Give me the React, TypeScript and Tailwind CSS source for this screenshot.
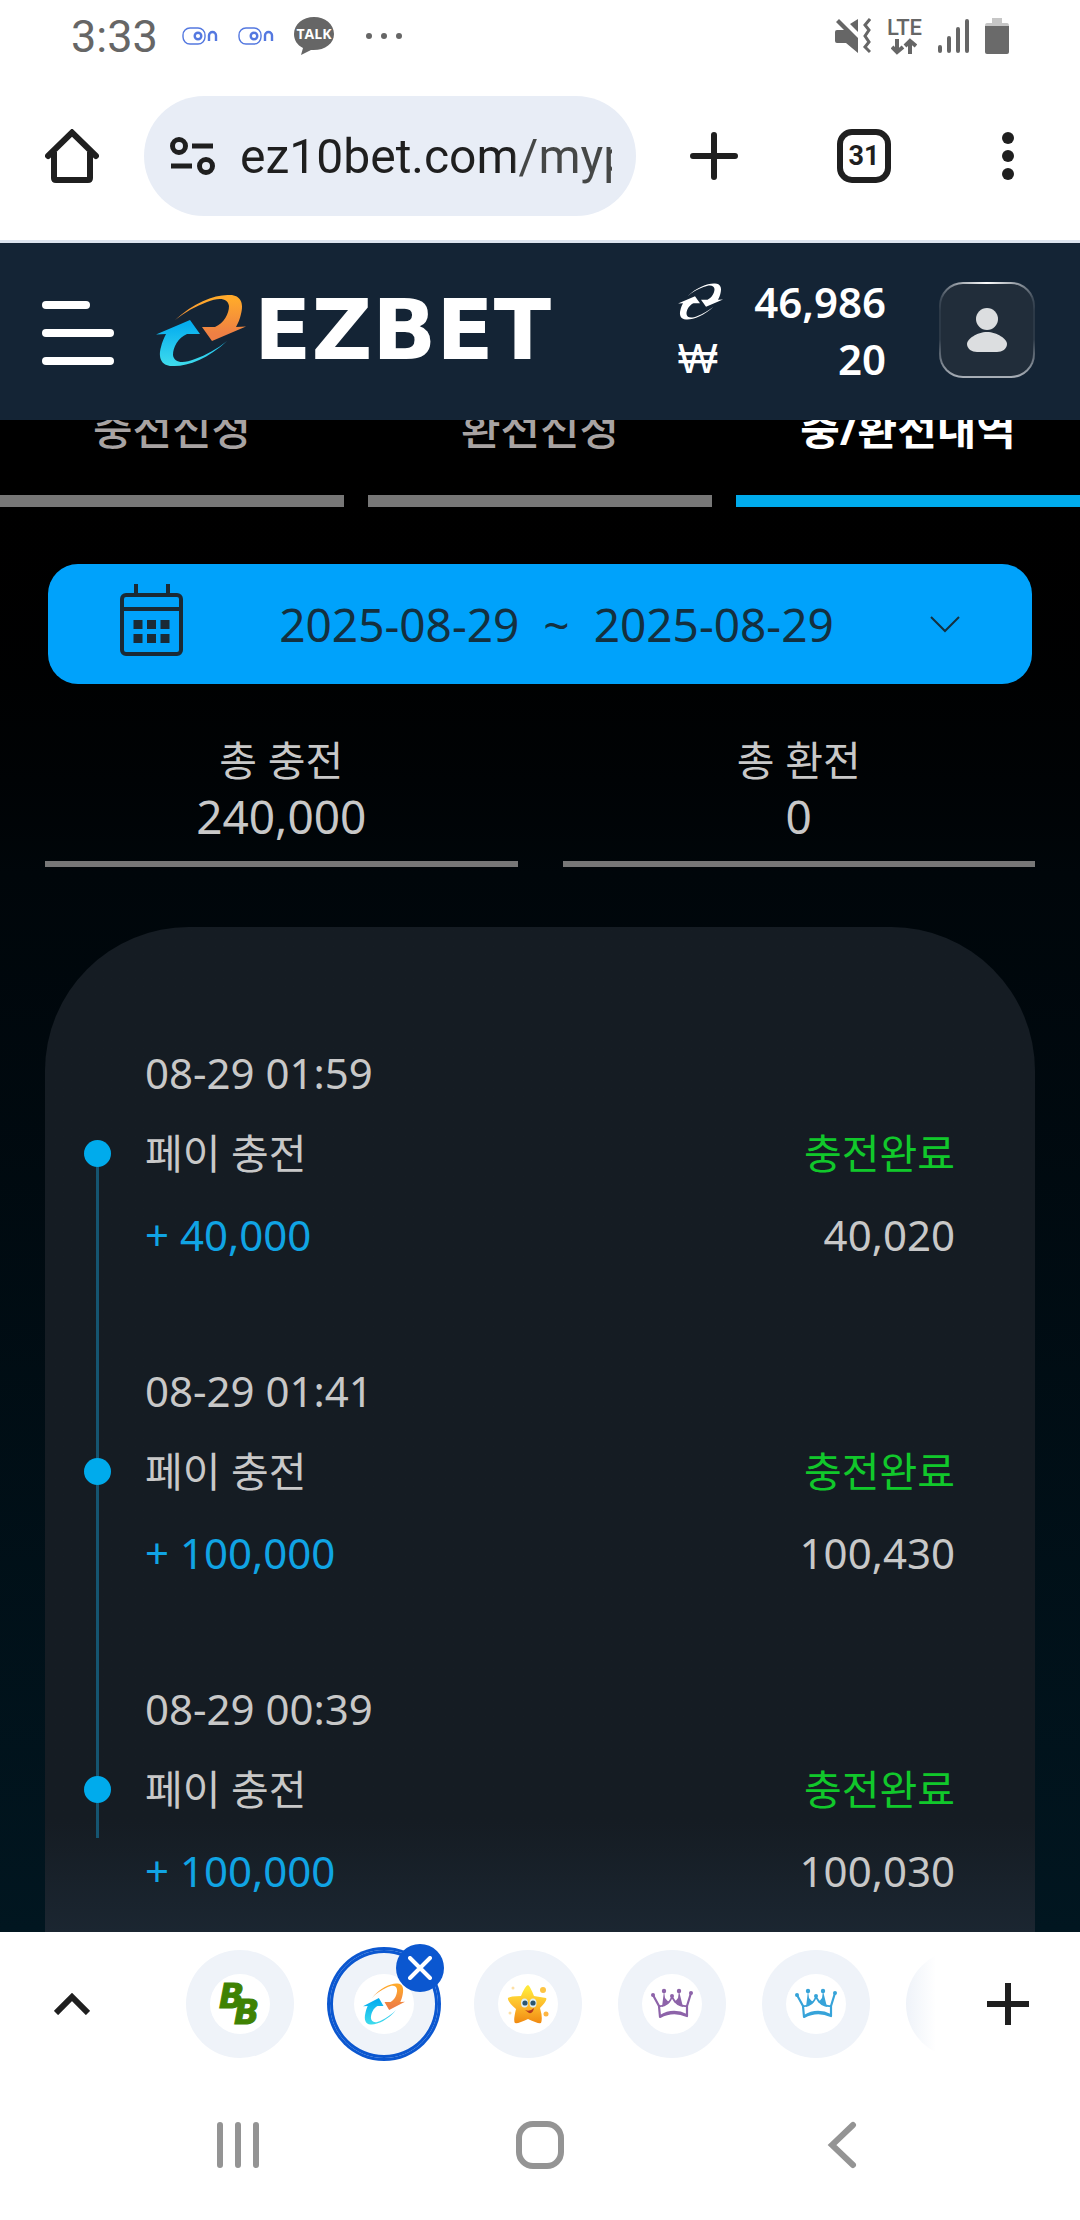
import type { ReactNode } from "react";
import clsx from "clsx";

type Transaction = {
  date: string;
  type: string;
  status: string;
  amount: string;
  balance: string;
};

const TABS = ["충전신청", "환전신청", "충/환전내역"];
const ACTIVE_TAB = "충/환전내역";

const TOTALS = [
  { label: "총 충전", value: "240,000" },
  { label: "총 환전", value: "0" },
];

const TRANSACTIONS: Transaction[] = [
  {
    date: "08-29 01:59",
    type: "페이 충전",
    status: "충전완료",
    amount: "+ 40,000",
    balance: "40,020",
  },
  {
    date: "08-29 01:41",
    type: "페이 충전",
    status: "충전완료",
    amount: "+ 100,000",
    balance: "100,430",
  },
  {
    date: "08-29 00:39",
    type: "페이 충전",
    status: "충전완료",
    amount: "+ 100,000",
    balance: "100,030",
  },
];

const ARROW =
  "M19 26C38 8 60 0 74 1C85 1 88 10 85 20C84 25 82 29 80 33L90 32.500L56 47L46 33L59 33C68 29 73 20 73 12C72 4 63 3 51 8C40 12 29 18 19 26Z";

const SwirlIcon = ({
  id,
  mono,
  className,
}: {
  id: string;
  mono?: boolean;
  className: string;
}) => (
  <svg
    viewBox="0 0 90 73"
    preserveAspectRatio="none"
    className={className}
    aria-hidden="true"
  >
    <defs>
      <linearGradient id={`${id}-orange`} x1="0" y1="0" x2="0" y2="1">
        <stop offset="0.1" stopColor="#ffa92b" />
        <stop offset="0.85" stopColor="#ee7f44" />
      </linearGradient>
      <linearGradient id={`${id}-blue`} x1="0" y1="1" x2="0" y2="0">
        <stop offset="0.1" stopColor="#06aeef" />
        <stop offset="1" stopColor="#3fdcec" />
      </linearGradient>
    </defs>
    <path d={ARROW} fill={mono ? "#fff" : `url(#${id}-orange)`} />
    <path
      d={ARROW}
      fill={mono ? "#fff" : `url(#${id}-blue)`}
      transform="rotate(180 45 36.5)"
    />
  </svg>
);

const ToggleOnIcon = () => (
  <svg
    viewBox="0 0 36 18"
    className="h-[18px] w-9"
    fill="none"
    stroke="#5478e0"
    aria-hidden="true"
  >
    <rect x="1" y="1" width="22" height="16" rx="7" strokeWidth="1.4" />
    <circle cx="16" cy="9" r="3.3" strokeWidth="2.4" />
    <path d="M27 14V8.500a3.500 3.500 0 0 1 7 0V14" strokeWidth="2.4" />
  </svg>
);

const TalkIcon = () => (
  <svg viewBox="0 0 40 38" className="h-[38px] w-10" aria-hidden="true">
    <path
      d="M20 0C9 0 0 7 0 17C0 23 3 28 9 31L7 38L17 33C30 34 40 27 40 17C40 7 31 0 20 0Z"
      fill="#666"
    />
    <text
      x="20"
      y="22"
      textAnchor="middle"
      fill="#fff"
      className="font-['Open_Sans'] text-[14px] font-bold"
    >
      TALK
    </text>
  </svg>
);

const StatusBar = () => (
  <div className="flex h-[72px] items-center justify-between px-[71px] text-[#666]">
    <div className="flex items-center">
      <span className="text-[45px] leading-none">3:33</span>
      <div className="ml-6 flex items-center gap-5">
        <ToggleOnIcon />
        <ToggleOnIcon />
        <TalkIcon />
      </div>
      <svg viewBox="0 0 36 6" className="ml-8 h-1.5 w-9" fill="#666">
        <circle cx="3" cy="3" r="3" />
        <circle cx="18" cy="3" r="3" />
        <circle cx="33" cy="3" r="3" />
      </svg>
    </div>
    <div className="flex items-center gap-4">
      <svg viewBox="0 0 36 36" className="size-9" aria-hidden="true">
        <path
          d="M0 14Q0 12 2 12H9L1 4L4 1L23 20V35L11 25H2Q0 25 0 23ZM23 1V14L15 6Z"
          fill="#666"
        />
        <path
          d="M35 1L30 7L34 12L30 18L34 24L30 29L35 34"
          fill="none"
          stroke="#666"
          strokeWidth="3"
        />
      </svg>
      <div className="flex flex-col items-center">
        <span className="text-[22px] font-medium leading-5">LTE</span>
        <svg
          viewBox="0 0 26 17"
          className="h-[17px] w-[26px]"
          fill="none"
          stroke="#666"
          strokeWidth="4"
          aria-hidden="true"
        >
          <path d="M6 1V14M1 9L6 14L12 9M19 16V3M14 8L19 3L25 8" />
        </svg>
      </div>
      <svg viewBox="0 0 31 34" className="h-[34px] w-[31px]" aria-hidden="true">
        <path
          d="M2 28V32M11 19V32M20 10V32M29 2V32"
          stroke="#666"
          strokeWidth="4"
          strokeLinecap="round"
        />
      </svg>
      <svg viewBox="0 0 24 36" className="h-9 w-6" aria-hidden="true">
        <path d="M7 0H17V5H22Q24 5 24 8H0Q0 5 2 5H7Z" fill="#c6c6c6" />
        <path d="M0 8H24V34Q24 36 22 36H2Q0 36 0 34Z" fill="#6a6a6a" />
      </svg>
    </div>
  </div>
);

const BrowserBar = () => (
  <div className="flex h-[168px] items-center">
    <button aria-label="Home" className="flex w-36 justify-center">
      <svg
        viewBox="0 0 54 54"
        className="size-[54px]"
        fill="none"
        stroke="#1f1f1f"
        strokeWidth="6"
      >
        <path d="M3 27L27 3.500L51 27" strokeLinecap="round" />
        <path d="M9 23V49Q9 51 11 51H43Q45 51 45 49V23" />
      </svg>
    </button>
    <div className="flex h-[120px] min-w-0 flex-1 items-center rounded-full bg-[#e8edf6] pl-[26px] pr-6">
      <svg
        viewBox="0 0 45 38"
        className="h-[38px] w-[45px] shrink-0"
        fill="none"
        stroke="#1f1f1f"
        strokeWidth="5"
        aria-hidden="true"
      >
        <circle cx="9" cy="9" r="6.500" />
        <circle cx="36" cy="29" r="6.500" />
        <path d="M22 9H43M1 29H22" />
      </svg>
      <input
        type="text"
        aria-label="Address"
        defaultValue="ez10bet.com/mypage"
        className="ml-[25px] h-20 w-full min-w-0 bg-linear-to-r from-[#1f1f1f] from-[274px] to-[#454746] to-[275px] bg-clip-text text-[48px] text-transparent outline-none"
      />
    </div>
    <button aria-label="New tab" className="flex w-[156px] justify-center">
      <svg
        viewBox="0 0 48 48"
        className="size-12"
        stroke="#1f1f1f"
        strokeWidth="6"
        strokeLinecap="round"
      >
        <path d="M24 3V45M3 24H45" />
      </svg>
    </button>
    <button aria-label="Tabs" className="flex w-36 justify-center">
      <span className="flex size-[54px] items-center justify-center rounded-[15px] border-6 border-[#1f1f1f] text-[27px] font-bold leading-none text-[#1f1f1f]">
        31
      </span>
    </button>
    <button aria-label="Menu" className="flex w-36 justify-center">
      <svg viewBox="0 0 12 48" className="h-12 w-3" fill="#1f1f1f">
        <circle cx="6" cy="6" r="6" />
        <circle cx="6" cy="24" r="6" />
        <circle cx="6" cy="42" r="6" />
      </svg>
    </button>
  </div>
);

const SiteHeader = () => (
  <header className="flex h-[180px] items-center justify-between border-t-3 border-[#dce3ee] bg-[#142435] pb-[3px] pl-[42px] pr-[45px] text-white">
    <div className="flex items-center">
      <button aria-label="메뉴" className="flex flex-col gap-5 pt-1.5">
        <span className="h-2 w-12 rounded-full bg-white" />
        <span className="h-2 w-[72px] rounded-full bg-white" />
        <span className="h-2 w-[72px] rounded-full bg-white" />
      </button>
      <a href="#home" className="ml-[42px] flex items-center gap-2">
        <SwirlIcon id="brand" className="h-[73px] w-[90px]" />
        <span className="font-['DejaVu_Sans'] text-[84px] font-bold leading-[73px]">
          EZBET
        </span>
      </a>
    </div>
    <div className="flex items-center">
      <div className="flex w-[208px] flex-col text-[42px] leading-[57px]">
        <div className="flex items-center justify-between">
          <SwirlIcon id="point" mono className="h-[37px] w-[45px]" />
          <span className="font-semibold">46,986</span>
        </div>
        <div className="flex items-center justify-between">
          <span className="font-['Liberation_Sans']">₩</span>
          <span className="font-semibold">20</span>
        </div>
      </div>
      <button
        aria-label="내 정보"
        className="ml-[53px] size-24 rounded-3xl bg-[radial-gradient(circle_at_50%_0,#ffffff,transparent_45%),linear-gradient(#5b6672,#2c3947_30%,#2c3947_60%,#aab0b8)] p-0.5"
      >
        <span className="flex h-full items-center justify-center rounded-[22px] bg-[#212d3a]">
          <svg viewBox="0 0 40 44" className="h-11 w-10" fill="#dcdee0">
            <circle cx="20" cy="11" r="11" />
            <path d="M20 24C30 24 40 31 40 36C40 41 35 44 30 44H10C5 44 0 41 0 36C0 31 10 24 20 24Z" />
          </svg>
        </span>
      </button>
    </div>
  </header>
);

const HistoryTabs = () => (
  // labels sit partly under the header, as the page is scrolled
  <nav className="flex h-[87px] items-end gap-6 overflow-hidden">
    {TABS.map((tab) => (
      <button
        key={tab}
        className={clsx(
          "h-[124px] flex-1 shrink-0 border-b-12 pb-5 text-[43px]",
          tab === ACTIVE_TAB
            ? "border-[#00abec] font-bold text-white"
            : "border-[#777] font-medium text-[#a8a3a2]"
        )}
      >
        {tab}
      </button>
    ))}
  </nav>
);

const DateRange = () => (
  <button className="mx-12 mt-[57px] flex h-[120px] items-center justify-between rounded-[30px] bg-[#00a2fb] px-[72px] text-[46px] text-[#14303f]">
    <svg
      viewBox="0 0 63 80"
      className="h-20 w-[63px]"
      fill="none"
      stroke="#1b2a35"
      strokeWidth="4"
      aria-hidden="true"
    >
      <path d="M16 0V10M48 0V10" />
      <rect x="2" y="11" width="59" height="59" rx="4" />
      <path d="M2 25H61" />
      <path
        d="M18 36V45M31.500 36V45M45 36V45M18 50V59M31.500 50V59M45 50V59"
        strokeWidth="9"
      />
    </svg>
    <span className="flex gap-6">
      <span>2025-08-29</span>
      <span>~</span>
      <span>2025-08-29</span>
    </span>
    <svg
      viewBox="0 0 30 17"
      className="h-[17px] w-[30px]"
      fill="none"
      stroke="#14303f"
      strokeWidth="2"
      aria-hidden="true"
    >
      <path d="M1 1L15 15L29 1" />
    </svg>
  </button>
);

const Totals = () => (
  <dl className="mx-[45px] mt-12 grid grid-cols-2 gap-[45px] text-center text-[#c8c8c8]">
    {TOTALS.map(({ label, value }) => (
      <div key={label} className="border-b-6 border-[#777] pb-[18px]">
        <dt className="text-[41px] leading-[57px]">{label}</dt>
        <dd className="text-[46px] leading-[54px]">{value}</dd>
      </div>
    ))}
  </dl>
);

const TransactionRow = ({
  date,
  type,
  status,
  amount,
  balance,
}: Transaction) => (
  <li className="flex items-center gap-[34px]">
    <span className="relative size-[27px] rounded-full bg-[#00abec]" />
    <div className="flex-1 text-[42px] leading-[81px]">
      <p>{date}</p>
      <p className="flex justify-between text-[41px]">
        <span>{type}</span>
        <span className="text-[#11c82b]">{status}</span>
      </p>
      <p className="flex justify-between">
        <span className="text-[#10a4e4]">{amount}</span>
        <span>{balance}</span>
      </p>
    </div>
  </li>
);

const History = () => (
  <section className="mx-[45px] mt-[60px] flex-1 rounded-t-[144px] bg-linear-to-t from-[#1b2631] to-[#151c23] to-[110px] pb-5 pl-[39px] pr-20 pt-[105px] text-[#c8c8c8]">
    <ol className="relative flex flex-col gap-[75px]">
      <span className="absolute bottom-[73px] left-3 top-[122px] w-[3px] bg-[#155571]" />
      {TRANSACTIONS.map((transaction) => (
        <TransactionRow key={transaction.date} {...transaction} />
      ))}
    </ol>
  </section>
);

const Crown = ({ color }: { color: string }) => (
  <svg viewBox="0 0 42 32" className="h-8 w-[42px]" aria-hidden="true">
    <path
      d="M2 7L8 18L9 29Q22 22 36 28L36 18L40 5"
      fill="none"
      stroke={color}
      strokeWidth="2.2"
      strokeLinejoin="round"
    />
    <path
      d="M8 18Q17 19 21 9Q26 19 36 18M9 28Q22 20 36 27"
      fill="none"
      stroke={color}
      strokeWidth="1.8"
    />
    <path
      d="M13 3L14 10Q16 13 19 14L11 19ZM28 3L27 10Q25 13 23 14L32 19Z"
      fill={color}
    />
    <circle cx="2" cy="7" r="2" fill={color} />
    <circle cx="13" cy="3" r="2.200" fill={color} />
    <circle cx="28" cy="3" r="2.200" fill={color} />
    <circle cx="40" cy="5" r="2" fill={color} />
    <circle cx="21" cy="8" r="2" fill={color} />
  </svg>
);

const StarIcon = () => (
  <svg viewBox="0 0 42 42" className="size-[42px]" aria-hidden="true">
    <defs>
      <linearGradient id="star" x1="0" y1="0" x2="0" y2="1">
        <stop offset="0.1" stopColor="#ffe83a" />
        <stop offset="0.55" stopColor="#fdb92a" />
        <stop offset="1" stopColor="#f08a12" />
      </linearGradient>
    </defs>
    <path
      d="M21 2Q23 3 27 13L39 15Q41 17 33 25Q36 35 34 40Q31 41 21 36Q11 41 8 40Q6 38 9 26Q0 18 1 15Q3 13 14 13Q18 3 21 2Z"
      fill="url(#star)"
    />
    <ellipse cx="17.500" cy="20" rx="3.500" ry="4.500" fill="#dff0f7" />
    <ellipse cx="26" cy="20" rx="3.500" ry="4.500" fill="#dff0f7" />
    <circle cx="18" cy="20" r="2.600" fill="#2c5670" />
    <circle cx="26" cy="20" r="2.600" fill="#2c5670" />
    <path d="M18 27Q23 29 27 25Q26 31 22 30Z" fill="#b63a1e" />
    <circle cx="36" cy="7" r="3" fill="#fdc443" />
    <circle cx="39" cy="31" r="2.500" fill="#fdb643" />
    <circle cx="6" cy="5" r="1.500" fill="#fde0a5" />
    <circle cx="3" cy="30" r="1.500" fill="#fde0a5" />
  </svg>
);

const DoubleBIcon = () => (
  <svg
    viewBox="0 0 42 42"
    className="size-[42px] overflow-visible font-['DejaVu_Sans'] text-[33px] font-bold italic"
    fill="#3f8203"
    stroke="#3f8203"
    strokeWidth="1"
    aria-hidden="true"
  >
    <text x="0" y="25">
      B
      <tspan x="15" y="41">
        B
      </tspan>
    </text>
  </svg>
);

const SiteTab = ({
  label,
  active,
  children,
}: {
  label: string;
  active?: boolean;
  children: ReactNode;
}) => (
  <div className="relative shrink-0">
    <button
      aria-label={label}
      className={clsx(
        "flex size-[108px] items-center justify-center rounded-full bg-[#eff3f9]",
        active && "shadow-[0_0_0_3px_#0b57d0,inset_0_0_0_3px_#0b57d0]"
      )}
    >
      <span className="flex size-[60px] items-center justify-center rounded-full bg-white">
        {children}
      </span>
    </button>
    {active && (
      <button
        aria-label="Close"
        className="absolute -right-1.5 -top-1.5 flex size-12 items-center justify-center rounded-full bg-[#0b57d0]"
      >
        <svg
          viewBox="0 0 24 24"
          className="size-6"
          stroke="#fff"
          strokeWidth="4"
          strokeLinecap="round"
        >
          <path d="M2 2L22 22M22 2L2 22" />
        </svg>
      </button>
    )}
  </div>
);

const TabStrip = () => (
  <div className="flex h-36 items-center">
    <button aria-label="Expand" className="flex w-36 shrink-0 justify-center">
      <svg
        viewBox="0 0 36 22"
        className="h-[22px] w-9"
        fill="none"
        stroke="#1f1f1f"
        strokeWidth="6"
      >
        <path d="M2 20L18 4L34 20" />
      </svg>
    </button>
    <div className="flex h-full min-w-0 flex-1 items-center gap-9 overflow-hidden pl-[42px]">
      <SiteTab label="BB">
        <DoubleBIcon />
      </SiteTab>
      <SiteTab label="EZBET" active>
        <SwirlIcon id="tab" className="size-[42px]" />
      </SiteTab>
      <SiteTab label="Star">
        <StarIcon />
      </SiteTab>
      <SiteTab label="Crown">
        <Crown color="#8d63a9" />
      </SiteTab>
      <SiteTab label="Crown 2">
        <Crown color="#36a3d9" />
      </SiteTab>
      <span className="size-[108px] shrink-0 rounded-full bg-linear-to-r from-[#eff3f9] to-white to-[30px]" />
    </div>
    <button aria-label="Add tab" className="flex w-36 shrink-0 justify-center">
      <svg
        viewBox="0 0 42 42"
        className="size-[42px]"
        stroke="#1f1f1f"
        strokeWidth="6"
      >
        <path d="M21 0V42M0 21H42" />
      </svg>
    </button>
  </div>
);

const SystemNav = () => (
  <div className="flex h-36 items-center justify-center pb-1.5">
    <button aria-label="Recents" className="flex w-[302px] justify-center">
      <svg
        viewBox="0 0 48 48"
        className="size-12"
        stroke="#949494"
        strokeWidth="6"
        strokeLinecap="round"
      >
        <path d="M6 4V44M24 4V44M42 4V44" />
      </svg>
    </button>
    <button aria-label="Home screen" className="flex w-[302px] justify-center">
      <span className="size-12 rounded-[17px] border-6 border-[#949494]" />
    </button>
    <button aria-label="Back" className="flex w-[302px] justify-center">
      <svg
        viewBox="0 0 30 48"
        className="h-12 w-[30px]"
        fill="none"
        stroke="#949494"
        strokeWidth="6"
        strokeLinecap="round"
      >
        <path d="M26 4L5 24L26 44" />
      </svg>
    </button>
  </div>
);

export default function App() {
  return (
    <div className="flex min-h-screen flex-col bg-white font-['Roboto','Noto_Sans_CJK_KR',sans-serif]">
      <StatusBar />
      <BrowserBar />
      <div className="flex flex-1 flex-col font-['Noto_Sans','Noto_Sans_CJK_KR',sans-serif]">
        <SiteHeader />
        <main className="flex flex-1 flex-col bg-linear-to-b from-black via-[#00060a] via-30% to-[#011620]">
          <HistoryTabs />
          <DateRange />
          <Totals />
          <History />
        </main>
      </div>
      <TabStrip />
      <SystemNav />
    </div>
  );
}
